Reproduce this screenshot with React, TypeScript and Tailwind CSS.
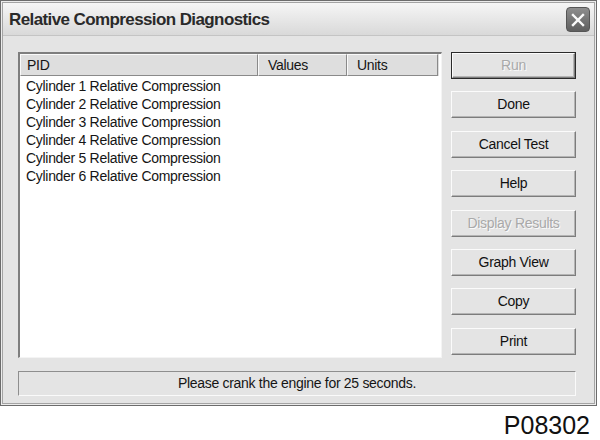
import React from "react";

const rows = [1, 2, 3, 4, 5, 6].map((n) => `Cylinder ${n} Relative Compression`);

type Btn = { label: string; disabled?: boolean; isDefault?: boolean };
const buttons: Btn[] = [
  { label: "Run", disabled: true, isDefault: true },
  { label: "Done" },
  { label: "Cancel Test" },
  { label: "Help" },
  { label: "Display Results", disabled: true },
  { label: "Graph View" },
  { label: "Copy" },
  { label: "Print" },
];

function Button({ label, disabled, isDefault }: Btn) {
  const inner = (
    <div className="h-full w-full flex items-center justify-center bg-[#e4e4e4] border border-t-[#fbfbfb] border-l-[#fbfbfb] border-b-[#7c7c7c] border-r-[#7c7c7c] shadow-[inset_-1px_-1px_0_#b4b4b4]">
      <span
        className={
          disabled
            ? "text-[#a9a9a9] [text-shadow:1px_1px_0_#fafafa]"
            : "text-[#111]"
        }
      >
        {label}
      </span>
    </div>
  );
  return (
    <div
      className={
        "h-[27px] w-[125px] " +
        (isDefault ? "border border-[#2a2a2a]" : "")
      }
    >
      {inner}
    </div>
  );
}

export default function App() {
  return (
    <div
      className="w-[600px] h-[440px] bg-white relative overflow-hidden text-[14px] tracking-[-0.3px] text-[#151515]"
      style={{ fontFamily: '"Liberation Sans", Arial, sans-serif' }}
    >
      <div className="w-[597px] h-[406px] border border-[#6c6c6c] p-[1px] bg-[#ececec]">
        <div className="h-full w-full border border-[#a4a4a4] flex flex-col">
          {/* title bar */}
          <div className="h-[33px] flex items-center justify-between pl-[6px] pr-[4px] bg-gradient-to-b from-[#f6f6f6] to-[#d9d9d9] border-b border-[#c4c4c4]">
            <span className="font-bold text-[17px] tracking-[-0.6px] text-[#2a2a2a] mt-[2px]">
              Relative Compression Diagnostics
            </span>
            <div className="w-[24px] h-[25px] rounded-[4px] bg-gradient-to-b from-[#8e8e8e] to-[#5f5f5f] border border-[#555] flex items-center justify-center mt-[1px]">
              <svg width="16" height="16" viewBox="0 0 16 16">
                <path d="M3 3 L13 13 M13 3 L3 13" stroke="#fafafa" strokeWidth="2.4" strokeLinecap="square" />
              </svg>
            </div>
          </div>
          {/* body */}
          <div className="flex-1 bg-[#e4e4e4] pl-[15px] pt-[16px] flex flex-col">
            <div className="flex">
              {/* list */}
              <div className="w-[424px] h-[306px] bg-white border-t-2 border-l-2 border-t-[#7e7e7e] border-l-[#7e7e7e] border-b border-r border-b-[#f4f4f4] border-r-[#f4f4f4] pr-[2px]">
                <div className="flex h-[22px] bg-[#dedede]">
                  <div className="w-[238px] border border-t-[#fafafa] border-l-[#fafafa] border-b-[#8a8a8a] border-r-[#8a8a8a] pl-[6px] flex items-center">
                    PID
                  </div>
                  <div className="w-[89px] border border-t-[#fafafa] border-l-[#fafafa] border-b-[#8a8a8a] border-r-[#8a8a8a] pl-[9px] flex items-center">
                    Values
                  </div>
                  <div className="w-[91px] border border-t-[#fafafa] border-l-[#fafafa] border-b-[#8a8a8a] border-r-[#8a8a8a] pl-[9px] flex items-center">
                    Units
                  </div>
                </div>
                <div className="pl-[6px] pt-[1px]">
                  {rows.map((r) => (
                    <div key={r} className="h-[18px] leading-[18px]">
                      {r}
                    </div>
                  ))}
                </div>
              </div>
              {/* buttons */}
              <div className="ml-[9px] flex flex-col gap-[12.4px]">
                {buttons.map((b) => (
                  <Button key={b.label} {...b} />
                ))}
              </div>
            </div>
            {/* status bar */}
            <div className="mt-[13px] w-[558px] h-[25px] flex items-center justify-center border border-t-[#8e8e8e] border-l-[#8e8e8e] border-b-[#fafafa] border-r-[#fafafa] bg-[#e4e4e4]">
              Please crank the engine for 25 seconds.
            </div>
          </div>
        </div>
      </div>
      <div className="flex justify-end pr-[10px] pt-[4px]">
        <span className="text-[25px] leading-[30px] tracking-[0px] text-[#111]">P08302</span>
      </div>
    </div>
  );
}
